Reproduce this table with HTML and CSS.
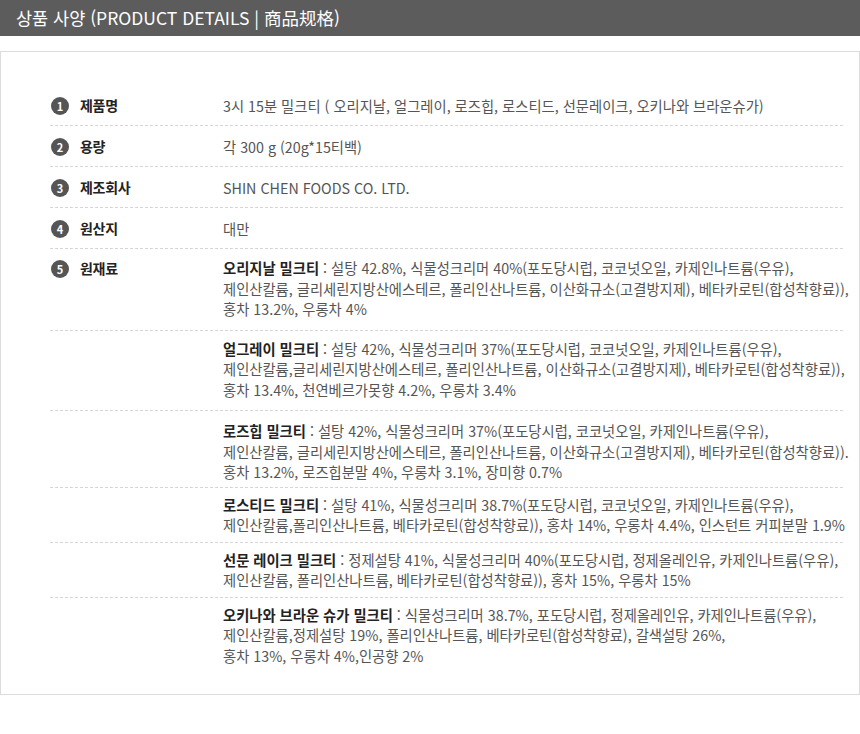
FILE: index.html
```html
<!DOCTYPE html>
<html lang="ko">
<head>
<meta charset="utf-8">
<title>상품 사양</title>
<link rel="stylesheet" href="styles.css">
</head>
<body>
<div class="page">
  <h2 class="title">상품 사양 (PRODUCT DETAILS | 商品规格)</h2>
  <div class="box">
    <div class="specs">
      <div class="row">
        <div class="label"><span class="num">1</span>제품명</div>
        <div class="value">3시 15분 밀크티 ( 오리지날, 얼그레이, 로즈힙, 로스티드, 선문레이크, 오키나와 브라운슈가)</div>
      </div>
      <div class="row">
        <div class="label"><span class="num">2</span>용량</div>
        <div class="value">각 300 g (20g*15티백)</div>
      </div>
      <div class="row">
        <div class="label"><span class="num">3</span>제조회사</div>
        <div class="value">SHIN CHEN FOODS CO. LTD.</div>
      </div>
      <div class="row">
        <div class="label"><span class="num">4</span>원산지</div>
        <div class="value">대만</div>
      </div>
      <div class="row multi r-a">
        <div class="label"><span class="num">5</span>원재료</div>
        <div class="value"><b>오리지날 밀크티</b> : 설탕 42.8%, 식물성크리머 40%(포도당시럽, 코코넛오일, 카제인나트륨(우유),<br>제인산칼륨, 글리세린지방산에스테르, 폴리인산나트륨, 이산화규소(고결방지제), 베타카로틴(합성착향료)),<br>홍차 13.2%, 우롱차 4%</div>
      </div>
      <div class="row multi r-b">
        <div class="label"></div>
        <div class="value"><b>얼그레이 밀크티</b> : 설탕 42%, 식물성크리머 37%(포도당시럽, 코코넛오일, 카제인나트륨(우유),<br>제인산칼륨,글리세린지방산에스테르, 폴리인산나트륨, 이산화규소(고결방지제), 베타카로틴(합성착향료)),<br>홍차 13.4%, 천연베르가못향 4.2%, 우롱차 3.4%</div>
      </div>
      <div class="row multi r-c">
        <div class="label"></div>
        <div class="value"><b>로즈힙 밀크티</b> : 설탕 42%, 식물성크리머 37%(포도당시럽, 코코넛오일, 카제인나트륨(우유),<br>제인산칼륨, 글리세린지방산에스테르, 폴리인산나트륨, 이산화규소(고결방지제), 베타카로틴(합성착향료)).<br>홍차 13.2%, 로즈힙분말 4%, 우롱차 3.1%, 장미향 0.7%</div>
      </div>
      <div class="row multi r-d">
        <div class="label"></div>
        <div class="value"><b>로스티드 밀크티</b> : 설탕 41%, 식물성크리머 38.7%(포도당시럽, 코코넛오일, 카제인나트륨(우유),<br>제인산칼륨,폴리인산나트륨, 베타카로틴(합성착향료)), 홍차 14%, 우롱차 4.4%, 인스턴트 커피분말 1.9%</div>
      </div>
      <div class="row multi r-d">
        <div class="label"></div>
        <div class="value"><b>선문 레이크 밀크티</b> : 정제설탕 41%, 식물성크리머 40%(포도당시럽, 정제올레인유, 카제인나트륨(우유),<br>제인산칼륨, 폴리인산나트륨, 베타카로틴(합성착향료)), 홍차 15%, 우롱차 15%</div>
      </div>
      <div class="row multi last">
        <div class="label"></div>
        <div class="value"><b>오키나와 브라운 슈가 밀크티</b> : 식물성크리머 38.7%, 포도당시럽, 정제올레인유, 카제인나트륨(우유),<br>제인산칼륨,정제설탕 19%, 폴리인산나트륨, 베타카로틴(합성착향료), 갈색설탕 26%,<br>홍차 13%, 우롱차 4%,인공향 2%</div>
      </div>
    </div>
  </div>
</div>
</body>
</html>
```
FILE: styles.css
```css
html, body {
  margin: 0;
  padding: 0;
  background: #fff;
}
body {
  font-family: "Noto Sans CJK KR", "Noto Sans", sans-serif;
  color: #555;
}
.page {
  width: 860px;
}
.title {
  margin: 0;
  height: 36px;
  line-height: 36px;
  background: #5c5c5c;
  color: #fff;
  font-size: 17.5px;
  font-weight: normal;
  padding-left: 16px;
}
.box {
  margin-top: 15px;
  width: 860px;
  height: 644px;
  border: 1px solid #dcdcdc;
  box-sizing: border-box;
  padding: 33px 0 0 49px;
  overflow: hidden;
}
.specs {
  width: 793px;
}
.row {
  display: flex;
  border-bottom: 1px dashed #d6d6d6;
  padding: 10px 0 9px;
  line-height: 21px;
  font-size: 14.3px;
}
.row.last {
  border-bottom: none;
}
.label {
  width: 173px;
  flex: none;
  display: flex;
  align-items: flex-start;
  font-weight: bold;
  color: #222;
  font-size: 14px;
  letter-spacing: -0.3px;
}
.num {
  flex: none;
  width: 18px;
  height: 18px;
  border-radius: 50%;
  background: #555;
  color: #fff;
  font-size: 11px;
  letter-spacing: 0;
  line-height: 18px;
  text-align: center;
  margin: 2px 11px 0 1px;
}
.value {
  white-space: nowrap;
  color: #555;
}
.value b {
  color: #222;
}
.multi {
  line-height: 20.5px;
}
.r-a { padding: 9px 0 10px; }
.r-b { padding: 8px 0 10px; }
.r-c { padding: 10px 0 4px; }
.r-d { padding: 7px 0 6px; }
.last { padding: 7px 0 0; }
```
